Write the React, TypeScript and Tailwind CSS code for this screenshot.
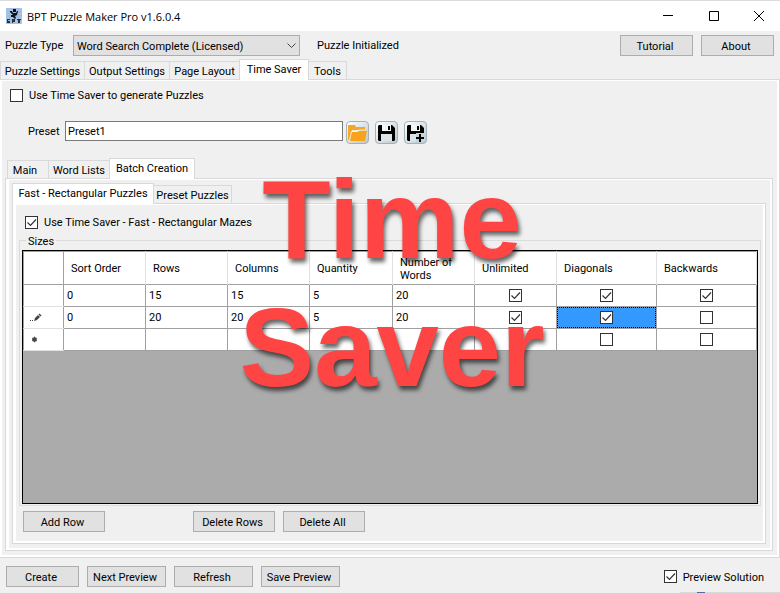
import type { ReactNode } from 'react'
import clsx from 'clsx'

type Row = {
  marker: ReactNode
  values: string[]
  flags: boolean[]
  selected?: number
}

const columns = [
  { name: 'Sort Order', width: 'w-[82px]' },
  { name: 'Rows', width: 'w-[82px]' },
  { name: 'Columns', width: 'w-[82px]' },
  { name: 'Quantity', width: 'w-[83px]' },
  { name: 'Number of Words', width: 'w-[82px]' },
  { name: 'Unlimited', width: 'w-[82px]' },
  { name: 'Diagonals', width: 'w-[100px]' },
  { name: 'Backwards', width: 'w-[100px]' },
]

const rows: Row[] = [
  { marker: null, values: ['0', '15', '15', '5', '20'], flags: [true, true, true] },
  { marker: <PencilMark />, values: ['0', '20', '20', '5', '20'], flags: [true, true, false], selected: 1 },
  { marker: <NewRowMark />, values: ['', '', '', '', ''], flags: [false, false, false] },
]

function PencilMark() {
  return (
    <svg width="12" height="9" viewBox="0 0 12 9" className="ml-[6px]">
      <path d="M0 7h1v1H0zM2 7h1v1H2z" fill="#444" />
      <path d="M4 8l1-3 3-3 2 2-3 3z" fill="#444" />
      <path d="M8.500 1.500l1-1 2 2-1 1z" fill="#444" />
    </svg>
  )
}

function NewRowMark() {
  return (
    <svg width="7" height="7" viewBox="0 0 7 7" className="ml-[7px]">
      <path d="M3.500 .5v6M1 2l5 3M6 2L1 5" stroke="#777" />
      <circle cx="3.500" cy="3.500" r="2.300" fill="#444" />
    </svg>
  )
}

function Check({ label, checked = false, text }: { label: string; checked?: boolean; text?: boolean }) {
  return (
    <label className="inline-flex items-center gap-[6px]">
      <span className="inline-grid">
        <input
          type="checkbox"
          defaultChecked={checked}
          aria-label={label}
          className="peer col-start-1 row-start-1 size-[13px] appearance-none border border-[#333] bg-white"
        />
        <svg
          viewBox="0 0 13 13"
          className="pointer-events-none invisible col-start-1 row-start-1 size-[13px] peer-checked:visible"
        >
          <path d="M2.500 6.500l3 3 5.500-6" fill="none" stroke="#333" strokeWidth="1.200" />
        </svg>
      </span>
      {text && <span className="pt-px">{label}</span>}
    </label>
  )
}

function Button({ children, className }: { children: ReactNode; className: string }) {
  return (
    <button type="button" className={clsx('h-[21px] border border-[#adadad] bg-[#e1e1e1] pt-px pr-[3px] text-center', className)}>
      {children}
    </button>
  )
}

function Tab({ children, active, className }: { children: ReactNode; active?: boolean; className: string }) {
  return (
    <button
      type="button"
      role="tab"
      aria-selected={!!active}
      className={clsx(
        'border border-b-0 border-[#d9d9d9] whitespace-nowrap',
        active ? 'z-10 -mb-px h-[21px] bg-white pb-[2px]' : '-mr-px h-[18px] bg-[#f0f0f0] pt-px',
        className,
      )}
    >
      {children}
    </button>
  )
}

function Pane({ children, className }: { children: ReactNode; className?: string }) {
  return (
    <div className="flex flex-1 flex-col border border-[#d9d9d9] bg-white pt-px pr-[2px] pb-[2px] pl-[3px]">
      <div className={clsx('flex flex-1 flex-col bg-[#f0f0f0]', className)}>{children}</div>
    </div>
  )
}

function IconButton({ label, children }: { label: string; children: ReactNode }) {
  return (
    <button
      type="button"
      aria-label={label}
      className="grid size-[23px] place-items-center rounded-[4px] border border-[#a3b1bb] bg-linear-to-br from-white to-[#b9c8d0]"
    >
      {children}
    </button>
  )
}

function Floppy({ plus }: { plus?: boolean }) {
  return (
    <svg width="19" height="19" viewBox="0 0 19 19">
      <path d="M1 3l1-1h13l3 3v12l-1 1H2l-1-1z" fill="#000" />
      <path d="M5 2h9v6H5z" fill="#f4f7f8" />
      <path d="M11 3h2v4h-2z" fill="#000" />
      <path d="M4 11h11v7H4z" fill="#dde4e8" />
      {plus && (
        <>
          <path d="M10 10h9v9h-9z" fill="#c6d2d9" />
          <path d="M13 11h2v3h3v2h-3v3h-2v-3h-3v-2h3z" fill="#000" />
        </>
      )}
    </svg>
  )
}

function AppIcon() {
  return (
    <svg width="16" height="16" viewBox="0 0 16 16" aria-hidden="true">
      <path d="M0 0h16v16H0z" fill="#a9c3e6" />
      <path d="M4 0v16M8 0v16M12 0v16M0 4h16M0 8h16M0 12h16" stroke="#8facd6" strokeWidth=".5" />
      <path d="M7 1h3v3H7zM4 3h2l1 2h3l1-2h1l-1 4-2 1 1 2-1 1-2-2H5V7h2L4 4z" fill="#111" />
      <path d="M1 11h3v1H2v1h2v2H1zM6 11h3v3H7v1H6zM11 11h4v1h-1v3h-2v-3h-1z" fill="#26313f" />
    </svg>
  )
}

export default function App() {
  return (
    <div className="relative flex min-h-screen flex-col overflow-hidden bg-[#f0f0f0] font-[Roboto,sans-serif] text-[11px] leading-[13px] text-black">
      <header className="flex h-[31px] items-center border-t border-[#dcdcdc] bg-white pl-[6px]">
        <AppIcon />
        <h1 className="ml-[5px] flex-1 font-['Open_Sans',sans-serif]">BPT Puzzle Maker Pro v1.6.0.4</h1>
        <div className="flex">
          <button type="button" aria-label="Minimize" className="grid h-[29px] w-[46px] place-items-center">
            <svg width="10" height="10" viewBox="0 0 10 10">
              <path d="M0 4.500h10" stroke="#000" />
            </svg>
          </button>
          <button type="button" aria-label="Maximize" className="grid h-[29px] w-[46px] place-items-center">
            <svg width="10" height="10" viewBox="0 0 10 10">
              <path d="M.5.5h9v9h-9z" fill="none" stroke="#000" />
            </svg>
          </button>
          <button type="button" aria-label="Close" className="grid h-[29px] w-[43px] place-items-center">
            <svg width="10" height="10" viewBox="0 0 10 10">
              <path d="M0 0l10 10M10 0L0 10" stroke="#000" />
            </svg>
          </button>
        </div>
      </header>

      <div className="flex h-[28px] items-start pt-[4px] pr-[6px] pl-[5px]">
        <label htmlFor="type" className="w-[68px] pt-[4px]">Puzzle Type</label>
        <div className="grid w-[227px]">
          <select
            id="type"
            className="col-start-1 row-start-1 h-[21px] appearance-none border border-[#adadad] bg-[#e1e1e1] pt-px pl-[3px]"
          >
            <option>Word Search Complete (Licensed)</option>
          </select>
          <svg
            width="9"
            height="6"
            viewBox="0 0 9 6"
            className="pointer-events-none col-start-1 row-start-1 mr-[4px] self-center justify-self-end"
          >
            <path d="M.5.5l4 4 4-4" fill="none" stroke="#444" />
          </svg>
        </div>
        <span className="flex-1 pt-[4px] pl-[17px]">Puzzle Initialized</span>
        <div className="flex gap-2">
          <Button className="w-[73px]">Tutorial</Button>
          <Button className="w-[73px]">About</Button>
        </div>
      </div>

      <div role="tablist" className="flex items-end">
        <Tab className="w-[85px]">Puzzle Settings</Tab>
        <Tab className="w-[86px]">Output Settings</Tab>
        <Tab className="w-[71px]">Page Layout</Tab>
        <Tab active className="w-[70px]">Time Saver</Tab>
        <Tab className="-ml-px w-[39px]">Tools</Tab>
      </div>

      <main className="-ml-[2px] flex flex-1 flex-col">
        <Pane className="pt-[7px] pr-[4px] pb-[4px] pl-[3px]">
          <div className="flex pl-[5px]">
            <Check text label="Use Time Saver to generate Puzzles" />
          </div>

          <div className="mt-[19px] flex pl-[23px]">
            <label htmlFor="preset" className="w-[37px] pt-[4px]">Preset</label>
            <input
              id="preset"
              defaultValue="Preset1"
              className="h-[20px] w-[278px] border border-[#7a7a7a] bg-white pl-[2px]"
            />
            <div className="ml-[3px] flex gap-[6px]">
              <IconButton label="Open preset">
                <svg width="19" height="18" viewBox="0 0 19 18">
                  <path d="M0 1h7l1 2h9v3H4L2 16H0z" fill="#f5a623" />
                  <path d="M3.500 8l7-.5 1-1H19L17 17H2z" fill="#f9a21b" />
                  <path d="M1.500 16l2-8.500h6l1-1.500H18" fill="none" stroke="#fff" strokeWidth=".7" />
                </svg>
              </IconButton>
              <IconButton label="Save preset"><Floppy /></IconButton>
              <IconButton label="Save preset as"><Floppy plus /></IconButton>
            </div>
          </div>

          <div role="tablist" className="mt-[14px] flex items-end pl-[2px]">
            <Tab className="w-[42px] pr-[6px]">Main</Tab>
            <Tab className="w-[62px]">Word Lists</Tab>
            <Tab active className="w-[86px]">Batch Creation</Tab>
          </div>

          <Pane className="pt-[3px] pr-[4px] pb-[4px] pl-[3px]">
            <div role="tablist" className="flex items-end">
              <Tab active className="w-[142px]">Fast - Rectangular Puzzles</Tab>
              <Tab className="-ml-px w-[79px]">Preset Puzzles</Tab>
            </div>

            <Pane className="pt-[10px] pr-[2px] pb-[9px] pl-[3px]">
              <div className="flex pl-[6px]">
                <Check checked text label="Use Time Saver - Fast - Rectangular Mazes" />
              </div>

              <div
                role="group"
                aria-labelledby="sizes"
                className="mt-[11px] flex flex-1 flex-col border border-[#dcdcdc] px-[2px] pb-px"
              >
                <span id="sizes" className="-mt-[6px] ml-[4px] self-start bg-[#f0f0f0] px-[2px]">
                  Sizes
                </span>
                <div className="mt-[2px] flex-1 border border-black bg-[#ababab]">
                  <table className="w-[733px] table-fixed border-collapse bg-white">
                    <thead>
                      <tr className="h-[33px] border-t border-b border-[#a0a0a0]">
                        <th aria-label="Row" className="w-[40px] border-r border-l border-[#a0a0a0] p-0" />
                        {columns.map((c, i) => (
                          <th
                            key={c.name}
                            className={clsx(
                              'border-r border-r-[#e0e0e0] pt-px pb-0 pl-[7px] text-left font-normal',
                              i === 4 && 'pr-[20px]',
                              c.width,
                            )}
                          >
                            {c.name}
                          </th>
                        ))}
                      </tr>
                    </thead>
                    <tbody>
                      {rows.map((row, r) => (
                        <tr key={r} className="h-[22px]">
                          <td className="border-b border-l border-b-[#e0e0e0] border-l-[#a0a0a0] p-0">{row.marker}</td>
                          {row.values.map((v, i) => (
                            <td key={i} className="border border-[#a0a0a0] py-0 pl-[3px]">
                              {v}
                            </td>
                          ))}
                          {row.flags.map((on, i) => (
                            <td key={i} className="border border-[#a0a0a0] p-0">
                              <div
                                className={clsx(
                                  'grid h-[21px] place-items-center',
                                  row.selected === i && 'border border-dotted border-black bg-[#3399ff]',
                                )}
                              >
                                <Check checked={on} label={`${columns[i + 5].name}, row ${r + 1}`} />
                              </div>
                            </td>
                          ))}
                        </tr>
                      ))}
                    </tbody>
                  </table>
                </div>
              </div>

              <div className="mt-[5px] flex pl-[4px]">
                <Button className="w-[82px]">Add Row</Button>
                <Button className="ml-[88px] w-[82px]">Delete Rows</Button>
                <Button className="ml-[8px] w-[82px]">Delete All</Button>
              </div>
            </Pane>
          </Pane>
        </Pane>
      </main>

      <footer className="flex items-center gap-2 px-[6px] pt-[8px] pb-[5px]">
        <Button className="w-[73px]">Create</Button>
        <Button className="w-[79px]">Next Preview</Button>
        <Button className="w-[79px]">Refresh</Button>
        <Button className="w-[79px]">Save Preview</Button>
        <div className="mr-[10px] ml-auto flex">
          <Check checked text label="Preview Solution" />
        </div>
      </footer>
      <div className="flex h-px justify-end">
        <div className="w-[17px] bg-[#d9d9d9]" />
        <div className="w-[8px] bg-[#5a68a0]" />
        <div className="w-[75px] bg-[#d9d9d9]" />
      </div>

      <p className="pointer-events-none absolute inset-x-0 top-[156px] z-20 pl-[4px] text-center font-['Liberation_Sans',sans-serif] text-[112px] leading-[128px] font-bold text-[#ff4444] [text-shadow:2px_4px_4px_rgba(0,0,0,0.6)]">
        Time
        <br />
        Saver
      </p>
    </div>
  )
}
